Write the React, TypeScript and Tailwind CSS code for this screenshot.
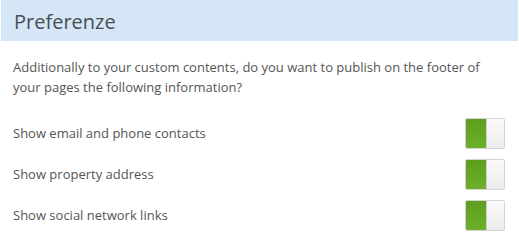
const rows = [
  'Show email and phone contacts',
  'Show property address',
  'Show social network links',
]

function Toggle() {
  return (
    <div className="flex h-[31px] w-[40px] overflow-hidden rounded-[2px] border border-[#d4d4d4]">
      <div className="w-[20px] bg-gradient-to-b from-[#5e9e1f] to-[#6cb02a]" />
      <div className="flex-1 border-l border-[#d0d0d0] bg-gradient-to-b from-[#fafafa] to-[#ececec]" />
    </div>
  )
}

export default function App() {
  return (
    <div className="h-[241px] w-[519px] bg-white font-['Open_Sans',sans-serif] text-[#555]">
      <div className="mx-[1px] flex h-[41px] items-center bg-[#d5e6f6] pl-[13px] pt-[2px] text-[20px] text-[#4a4d52]">
        Preferenze
      </div>
      <div className="pl-[13px] pr-[14px] pt-[16px]">
        <p className="text-[13px] leading-[20px]">
          Additionally to your custom contents, do you want to publish on the footer of your pages the following information?
        </p>
        <div className="mt-[21px] flex flex-col gap-[10px]">
          {rows.map((label) => (
            <div key={label} className="flex items-center justify-between">
              <span className="text-[13px]">{label}</span>
              <Toggle />
            </div>
          ))}
        </div>
      </div>
    </div>
  )
}
